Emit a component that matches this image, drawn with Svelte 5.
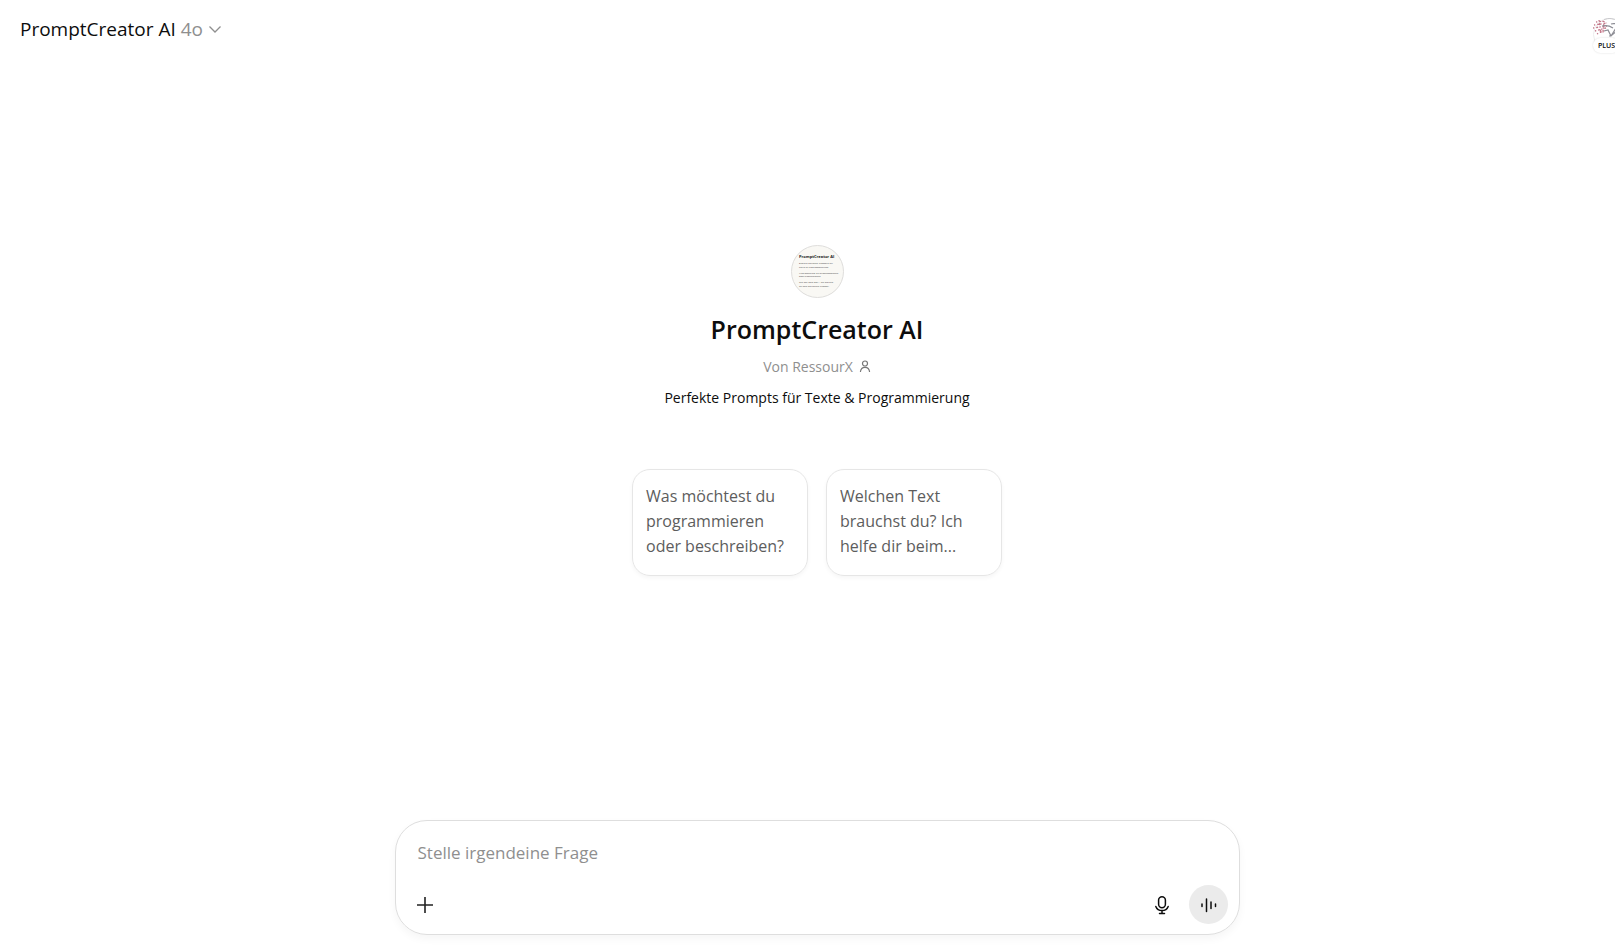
<script lang="ts">
	let question = $state('');

	const starters = [
		'Was möchtest du programmieren oder beschreiben?',
		'Welchen Text brauchst du? Ich helfe dir beim...'
	];

	function pick(text: string) {
		question = text;
	}
</script>

<div class="shell">
	<header>
		<button class="model">
			<span>PromptCreator AI <span class="version">4o</span></span>
			<svg width="16" height="16" viewBox="0 0 16 16" fill="none" stroke="#8f8f8f" stroke-width="1.3"><path d="M2.5 5.5 8 11l5.5-5.5" /></svg>
		</button>
		<button class="profile" aria-label="Profil">
			<svg width="33" height="33" viewBox="0 0 33 33" fill="none">
				<circle cx="16.5" cy="16.5" r="16" fill="#fff" stroke="#ececec" />
				<path d="M11 1.5a16 16 0 0 1 14 1.5" stroke="#c9c9cc" />
				<g stroke="#c4788a" stroke-width="1.3" stroke-dasharray="1.3 1.9 2 1.2">
					<path d="M3 4l9-1M1 7l13-2M0 10l14-2M2 13l11-3M4 16l7-4M6 2l2 13M11 3l-1 12" />
				</g>
				<path d="M9 8c5-1 8 0 11 2M11 13l4-1 3 6 7-11M16 18c3 0 5-2 7-5M18 6c3-1 6 0 8 2" stroke="#8c8c94" stroke-width="1.2" />
			</svg>
			<span class="plan">PLUS</span>
		</button>
	</header>

	<main>
		<svg class="logo" width="53" height="53" viewBox="0 0 53 53">
			<circle cx="26.5" cy="26.5" r="26" fill="#f9f8f4" stroke="#dedddb" />
			<g font-size="2.5" fill="#444">
				<text x="8" y="13" font-size="4" font-weight="700" fill="#222">PromptCreator AI</text>
				<text x="8" y="19">Erstelle perfekte Prompts für</text>
				<text x="8" y="22.5">Texte &amp; Programmierung</text>
				<text x="8" y="28.5">Was möchtest du programmieren</text>
				<text x="8" y="32">oder beschreiben?</text>
				<text x="8" y="38">Gib mir dein Ziel – ich erstelle</text>
				<text x="8" y="41.5">dir den perfekten Prompt.</text>
			</g>
		</svg>
		<h1>PromptCreator AI</h1>
		<p class="author">
			Von RessourX
			<svg width="12" height="14" viewBox="0 0 12 14" fill="none" stroke="#777" stroke-width="1.2"><circle cx="6" cy="3.5" r="2.5" /><path d="M1.4 12c.3-3 2-4.6 4.6-4.6s4.3 1.6 4.6 4.6" /></svg>
		</p>
		<p class="tagline">Perfekte Prompts für Texte &amp; Programmierung</p>

		<div class="starters">
			{#each starters as text}
				<button class="card" onclick={() => pick(text)}>{text}</button>
			{/each}
		</div>
	</main>

	<form class="composer" onsubmit={(e) => e.preventDefault()}>
		<input type="text" bind:value={question} placeholder="Stelle irgendeine Frage" aria-label="Stelle irgendeine Frage" />
		<div class="tools">
			<button type="button" class="tool" aria-label="Hinzufügen">
				<svg width="20" height="20" viewBox="0 0 20 20" fill="none" stroke="#222" stroke-width="1.6"><path d="M10 2v16M2 10h16" /></svg>
			</button>
			<button type="button" class="tool mic" aria-label="Diktieren">
				<svg width="20" height="20" viewBox="0 0 20 20" fill="none" stroke="#0d0d0d" stroke-width="1.5" stroke-linecap="round"><rect x="6.6" y="1.7" width="6.8" height="11" rx="3.4" /><path d="M3.8 11.5c1 2.6 3.2 4.1 6.2 4.1s5.2-1.5 6.2-4.1M10 15.6v3M7.5 18.6h5" /></svg>
			</button>
			<button type="button" class="tool voice" aria-label="Sprachmodus">
				<svg width="20" height="20" viewBox="0 0 20 20" fill="none" stroke="#0d0d0d" stroke-width="1.5" stroke-linecap="round"><path d="M4 9v2.5M8.5 4v12.5M13 7v6.5M17.5 9v2.5" /></svg>
			</button>
		</div>
	</form>
</div>

<style>
	:global(body) { margin: 0; background: #fff; color: #0d0d0d; overflow: hidden; }

	/* the column is a scrollbar wider than the window */
	.shell {
		width: calc(100% + 19px);
		height: 100vh;
		display: flex;
		flex-direction: column;
		font-family: "Segoe UI", "Open Sans", sans-serif;
	}
	button { border: 0; background: none; padding: 0; color: inherit; font: inherit; cursor: pointer; }
	svg { display: block; }

	header { display: flex; justify-content: space-between; align-items: flex-start; height: 60px; padding: 0 8px 0 20px; }
	.model { display: flex; align-items: center; gap: 4px; margin-top: 15px; font-size: 19px; line-height: 28px; }
	.version { color: #8f8f8f; }
	.profile { position: relative; margin-top: 18px; }
	.plan {
		position: absolute; left: 0; top: 20px;
		padding: 0 5px; border-radius: 8px; background: #fff;
		box-shadow: 0 0 2px rgba(0,0,0,0.15);
		font-size: 7px; line-height: 15px; font-weight: 600;
	}

	main { flex: 1; display: flex; flex-direction: column; align-items: center; justify-content: center; padding-bottom: 59px; }
	h1 { margin: 13px 0 0; font-size: 25px; line-height: 36px; font-weight: 600; }
	p { margin: 0; font-size: 14px; line-height: 22px; }
	.author { display: flex; align-items: center; gap: 6px; margin-top: 9px; color: #8f8f8f; }
	.tagline { margin-top: 9px; }

	.starters { display: flex; gap: 18px; margin-top: 60px; }
	.card {
		width: 176px; min-height: 107px; box-sizing: border-box; padding: 14px 13px;
		display: flex; align-items: flex-start;
		border: 1px solid #e6e6e6; border-radius: 18px;
		box-shadow: 0 2px 4px rgba(0,0,0,0.04);
		color: #5d5d5d; font-size: 16px; line-height: 25px; text-align: left;
	}

	.composer {
		width: 845px; max-width: 100%; box-sizing: border-box; margin: 0 auto 15px; padding: 18px 11px 10px 10px;
		border: 1px solid #dedede; border-radius: 32px;
		box-shadow: 0 4px 8px rgba(0,0,0,0.04);
	}
	input {
		display: block; width: 100%; box-sizing: border-box; height: 26px; padding: 0 12px;
		border: 0; outline: 0; background: none; color: #0d0d0d;
		font: inherit; font-size: 17px;
	}
	input::placeholder { color: #8f8f8f; opacity: 1; }
	.tools { display: flex; align-items: center; margin-top: 20px; }
	.tool { display: flex; align-items: center; justify-content: center; width: 39px; height: 39px; border-radius: 50%; }
	.mic { margin: 0 7px 0 auto; }
	.voice { background: #ebebeb; }
</style>
